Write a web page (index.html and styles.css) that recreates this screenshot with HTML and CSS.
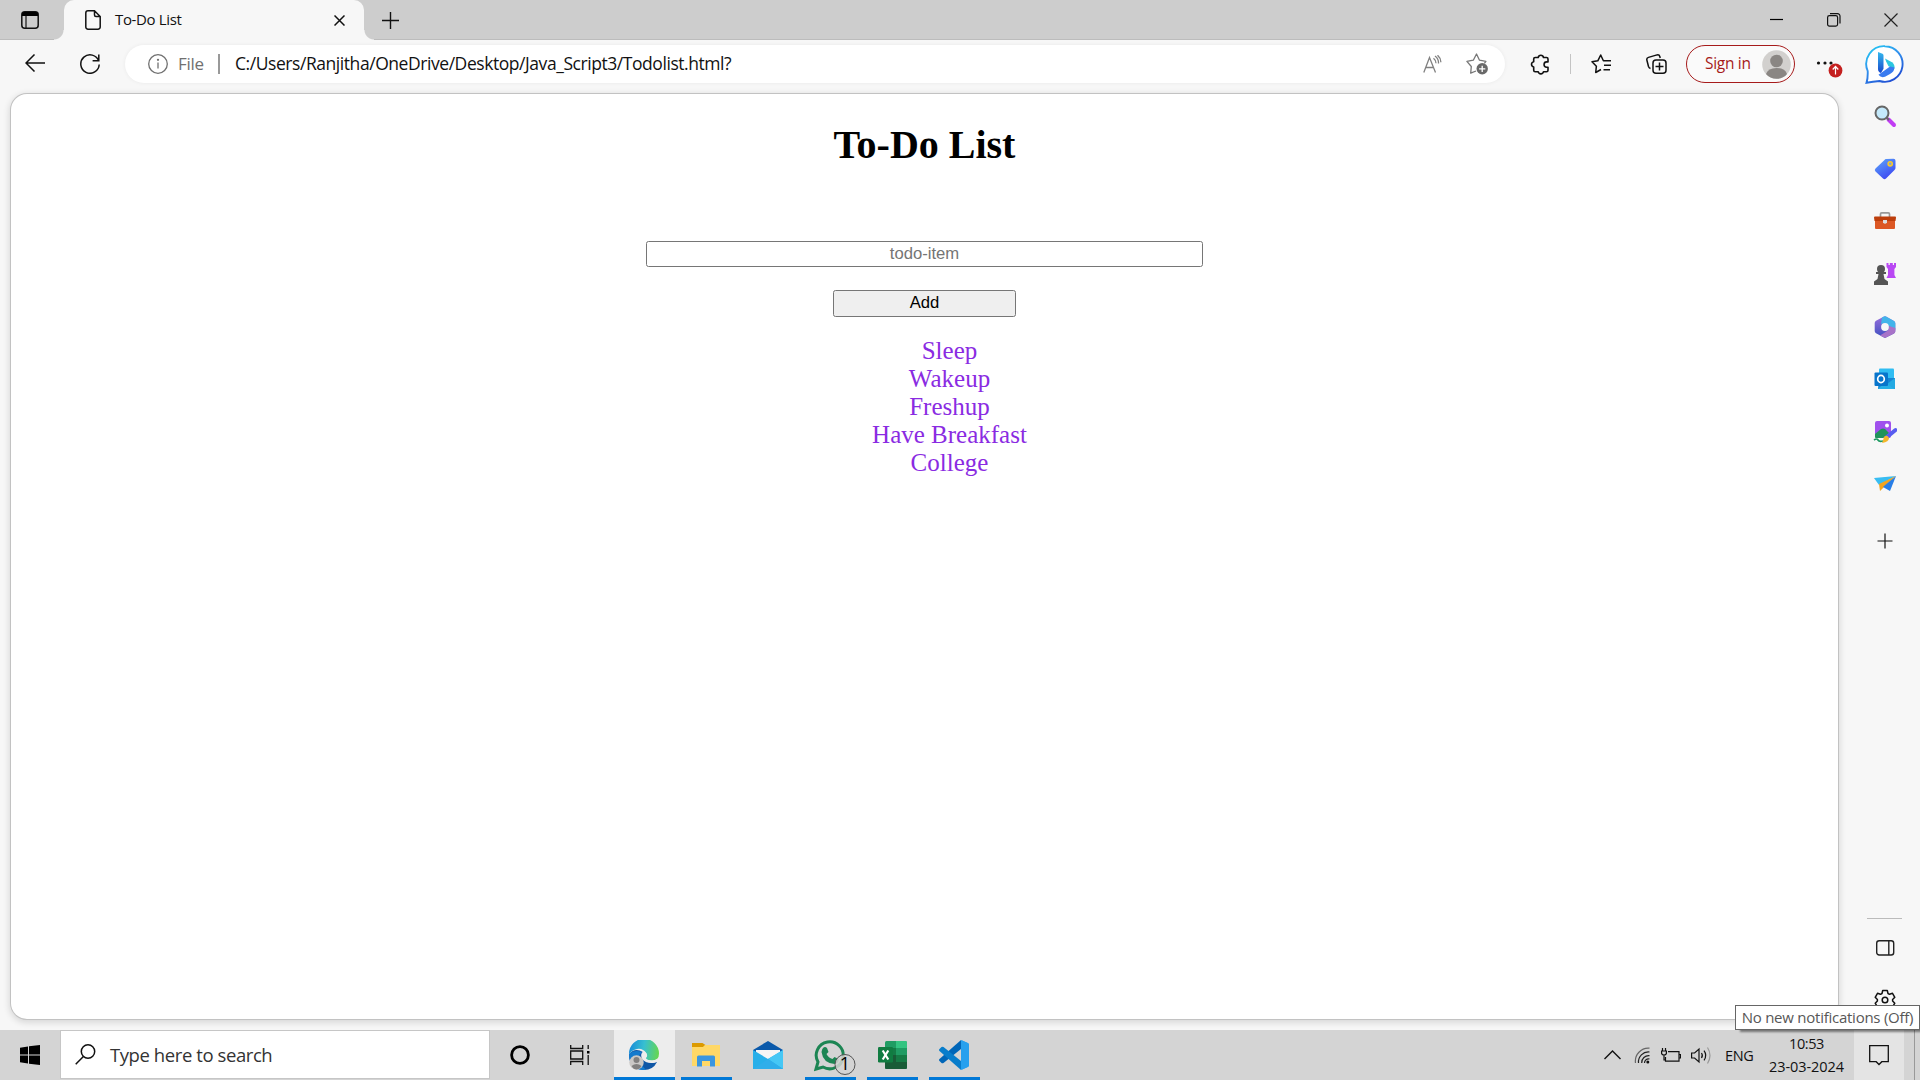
FILE: index.html
```html
<!DOCTYPE html>
<html lang="en">
<head>
<meta charset="utf-8">
<title>To-Do List</title>
<link rel="stylesheet" href="styles.css">
</head>
<body>
<div class="browser">
  <header class="tabstrip">
    <div class="tab-actions">
      <svg width="18" height="18" viewBox="0 0 18 18"><rect x=".8" y=".8" width="16.4" height="16.4" rx="3" fill="none" stroke="#111" stroke-width="1.5"/><path d="M1 5V3a2 2 0 0 1 2-2h12a2 2 0 0 1 2 2v2z" fill="#000"/><path d="M5 5v12" stroke="#111" stroke-width="1.2"/></svg>
    </div>
    <div class="tab">
      <svg class="doc" width="16" height="20" viewBox="0 0 16 20" fill="none" stroke="#111" stroke-width="1.5"><path d="M9.5.8H3A2.2 2.2 0 0 0 .8 3v14A2.2 2.2 0 0 0 3 19.2h10a2.2 2.2 0 0 0 2.2-2.2V6.500L9.500.8v4.200a1.500 1.500 0 0 0 1.500 1.500h4.200"/></svg>
      <span class="tab-title">To-Do List</span>
      <svg width="11" height="11" viewBox="0 0 11 11" stroke="#111" stroke-width="1.5"><path d="M.5.5l10 10M10.500.5l-10 10"/></svg>
    </div>
    <svg class="new-tab" width="17" height="17" viewBox="0 0 17 17" stroke="#111" stroke-width="1.400"><path d="M8.500 0v17M0 8.500h17"/></svg>
    <div class="window-buttons">
      <svg width="14" height="14" viewBox="0 0 14 14" stroke="#000" stroke-width="1.200"><path d="M0 6.500h13"/></svg>
      <svg width="14" height="14" viewBox="0 0 14 14" stroke="#111" stroke-width="1.200" fill="none"><rect x=".6" y="2.600" width="10" height="10.500" rx="1.800"/><path d="M3 .7h7.500a2.500 2.500 0 0 1 2.500 2.500V10.500"/></svg>
      <svg width="14" height="14" viewBox="0 0 14 14" stroke="#222" stroke-width="1.200"><path d="M.5.5l13 13M13.500.5l-13 13"/></svg>
    </div>
  </header>

  <div class="toolbar">
    <svg class="back" width="20" height="18" viewBox="0 0 20 18" fill="none" stroke="#111" stroke-width="1.500"><path d="M20 9H1M9.500.5L1 9l8.500 8.500"/></svg>
    <svg class="reload" width="20" height="20" viewBox="0 0 20 20" fill="none" stroke="#111" stroke-width="1.500"><path d="M18.700 7A9.200 9.200 0 1 0 19.200 10.500M18.800.5V6.700H12.600"/></svg>
    <div class="address">
      <svg width="20" height="20" viewBox="0 0 20 20" fill="none" stroke="#707070" stroke-width="1.300"><circle cx="10" cy="10" r="9.300"/><path d="M10 8.500v6"/><circle cx="10" cy="5.800" r=".5" fill="#707070"/></svg>
      <span class="scheme">File</span>
      <span class="divider"></span>
      <span class="url">C:/Users/Ranjitha/OneDrive/Desktop/Java_Script3/Todolist.html?</span>
      <svg class="read" width="19" height="18" viewBox="0 0 19 18" fill="none" stroke="#808080" stroke-width="1.300"><path d="M.8 17.500L6.500 2.500l6 15M2.700 12.500h8M10.500 3.200q2.500 2 2.500 5M12 .9q3.800 2.800 3.500 7.600M14.500.2q3.500 3 3.300 7"/></svg>
      <svg width="23" height="22" viewBox="0 0 23 22" fill="none" stroke="#777" stroke-width="1.300"><path d="M10 18l-5.300 2.200.6-6.700L.9 8.400l6.400-1.200L10.500 1l3 6.200 6.400 1.200-1.500 2" stroke-linejoin="round"/><circle cx="16.200" cy="15.800" r="5.700" fill="#696969" stroke="none"/><path d="M16.200 12.700v6.200M13.100 15.800h6.200" stroke="#fff"/></svg>
    </div>
    <svg class="puzzle" width="20" height="21" viewBox="0 0 20 21" fill="none" stroke="#111" stroke-width="1.600" stroke-linejoin="round"><path d="M5.200 3.500h3a2.700 2.700 0 0 1 5.300 0h3q1.500 0 1.500 1.500v2.900h-1.300a2.600 2.600 0 0 0 0 5.300H18v3q0 1.500-1.500 1.500h-3a2.700 2.700 0 0 1-5.300 0h-3q-1.500 0-1.500-1.500v-3.200a2.700 2.700 0 0 1 0-5.300V5q0-1.500 1.500-1.500z"/></svg>
    <span class="toolbar-line"></span>
    <svg class="favs" width="21" height="20" viewBox="0 0 21 20" fill="none" stroke="#111" stroke-width="1.500" stroke-linejoin="round"><path d="M10 15.500l-5.300 3 .7-6.300L1 7.800l5.800-1L9.700 1l2.700 5.800H20M13 11.300h7M12.500 15.800H19"/></svg>
    <svg class="collections" width="21" height="20" viewBox="0 0 21 20" fill="none" stroke="#111" stroke-width="1.500"><path d="M4.500 14.500a3 3 0 0 1-2-2L.9 6.200A2.300 2.300 0 0 1 2.500 3.400L11 .9a2.300 2.300 0 0 1 2.800 1.600l.4 1.500"/><rect x="7" y="6" width="13" height="13.200" rx="3"/><path d="M13.500 8.500v8M9.500 12.500h8"/></svg>
    <div class="signin"><span>Sign in</span>
      <svg width="29" height="29" viewBox="0 0 29 29"><circle cx="14.500" cy="14.500" r="14.300" fill="#d2d0ce"/><circle cx="14.500" cy="11" r="6.300" fill="#8a8683"/><path d="M4 24q2-6 10.500-6T25 24q-4 4.800-10.500 4.800T4 24z" fill="#8a8683"/></svg>
    </div>
    <svg class="more" width="28" height="28" viewBox="0 0 28 28"><g fill="#111"><circle cx="2.500" cy="13" r="1.600"/><circle cx="9" cy="13" r="1.600"/><circle cx="15" cy="13" r="1.600"/></g><circle cx="19.500" cy="20.500" r="6.900" fill="#c4201f"/><path d="M19.500 24.500v-7.500M16.700 19.500l2.800-3 2.800 3" fill="none" stroke="#fff" stroke-width="1.200"/></svg>
    <svg class="bing" width="39" height="40" viewBox="0 0 39 40"><defs><linearGradient id="ring" x1="0" y1="0" x2="0.600" y2="1"><stop offset="0" stop-color="#21cdf2"/><stop offset=".5" stop-color="#3293ee"/><stop offset="1" stop-color="#2050d4"/></linearGradient><linearGradient id="bee" x1="0" y1="0" x2="0" y2="1"><stop offset="0" stop-color="#35b9ee"/><stop offset="1" stop-color="#1747cc"/></linearGradient></defs><path d="M20 1.200a17.800 17.800 0 1 1-5.500 34.800Q8 36.500 1.500 37.800 3 33 2.700 26A17.800 17.800 0 0 1 20 1.200z" fill="#fff" stroke="url(#ring)" stroke-width="1.900"/><path d="M13 7l4.500 1.800q1 .5 1 2v13l-2.500 4.200Q13 27 13 24z" fill="url(#bee)"/><path d="M20 13.500l7 3.700q3 2 2.500 6.500l-6-2.500-2.500-5z" fill="#2cc6df"/><path d="M16 28l9-6.500 4.500 1Q29 27 25 29l-5 2.800q-4 1.500-6.500-2z" fill="#397bf0"/></svg>
  </div>

  <div class="content">
    <main class="page">
      <h1>To-Do List</h1>
      <form class="todo-form">
        <input class="todo-input" type="text" placeholder="todo-item">
        <button class="todo-add" type="button">Add</button>
      </form>
      <ul class="todos"><li>Sleep</li><li>Wakeup</li><li>Freshup</li><li>Have Breakfast</li><li>College</li></ul>
    </main>
    <aside class="sidebar">
      <svg viewBox="0 0 24 24"><path d="M15.500 15.500l5.500 5.500" stroke="#c13df4" stroke-width="4" stroke-linecap="round"/><path d="M13 13l3 3" stroke="#666" stroke-width="2"/><circle cx="9" cy="9" r="6.500" fill="#c4e9fb" stroke="#666" stroke-width="2"/></svg>
      <svg viewBox="0 0 24 24"><defs><linearGradient id="tag" x1="0" y1="0" x2=".6" y2="1"><stop offset="0" stop-color="#5da9fa"/><stop offset="1" stop-color="#3e49f2"/></linearGradient></defs><path d="M13 2l7.500-.2q2 0 2 2V11q0 1-1 2L13 21.500q-1.500 1.500-3 0l-7.500-7q-1.500-1.500 0-3L11.500 3q.5-.8 1.500-1z" fill="url(#tag)"/><circle cx="17.200" cy="6.800" r="2.100" fill="#81a3d0" stroke="#f7c829" stroke-width="1.600"/></svg>
      <svg viewBox="0 0 24 24"><path d="M7.500 8V5q0-1.200 1.200-1.200h6.600q1.200 0 1.200 1.200v3" fill="none" stroke="#999" stroke-width="1.700"/><rect x="2" y="8" width="20" height="12" rx="1" fill="#dc5724"/><path d="M1 8.500Q1 7.500 2 7.500h20q1.200 0 1 1.200L22.500 12h-21z" fill="#bd3e0c"/><path d="M10 11h4v2.500q-2 2.500-4 0z" fill="#ddd"/></svg>
      <svg viewBox="0 0 24 24"><path d="M13.500 1h2v2h1.300V1h3v2H21V1h2v4l-1.600 2v6l1.600 3h-9.500l1.500-3V7l-1.500-2z" fill="#b948f3"/><g fill="#555"><circle cx="8" cy="7" r="4"/><path d="M3 10h10v2H10.500l1 5 3.500 2.500V23H1v-3.500L4.500 17l1-5H3z"/></g></svg>
      <svg viewBox="0 0 24 24"><defs><linearGradient id="m365" x1="0" y1="0" x2="0" y2="1"><stop offset="0" stop-color="#9a6fdc"/><stop offset="1" stop-color="#3c50c0"/></linearGradient></defs><path d="M11 1.500q1-.6 2 0l8 4.500q1.300.8 1.300 2.200v8q0 1.400-1.300 2.200l-8 4.200q-1 .6-2 0l-8-4.400q-1.300-.8-1.300-2.200V8Q1.700 6.600 3 5.800z" fill="url(#m365)"/><path d="M9 2.600l2-1.100q1-.6 2 0l8 4.500q1.300.8 1.300 2.200V15L16 11l-4-3-4 1z" fill="#42b4ea"/><path d="M22.300 13v3.200q0 1.400-1.300 2.200l-8 4.200q-1 .6-2 0L7 20.400l8-4.900 1-4.500z" fill="#a873c8"/><circle cx="12" cy="12" r="3.900" fill="#f7f7f7"/></svg>
      <svg viewBox="0 0 24 24"><rect x="6" y="1.500" width="15" height="12" rx="1" fill="#30bdf2"/><path d="M6 11h16v11H5z" fill="#1685d4"/><path d="M22 11l-8 6 8 5z" fill="#23a9e2"/><path d="M12 15l10 7H5z" fill="#27b0e7"/><rect x="1.500" y="5.500" width="13.500" height="13.500" rx="1" fill="#0875cb"/><ellipse cx="8" cy="12" rx="3.300" ry="3.600" fill="none" stroke="#fff" stroke-width="1.700"/></svg>
      <svg viewBox="0 0 24 24"><rect x="2" y="1" width="16" height="17" rx="2" fill="#a051ed"/><circle cx="14" cy="5.500" r="2" fill="#fff"/><path d="M2 14l6-5q2-1 4 0l4 4-6 5H3q-1 0-1-1z" fill="#20935b"/><path d="M1 20q3-2 4 0t5 1" fill="none" stroke="#1c9a60" stroke-width="1.700"/><path d="M14 17l8.500-7" stroke="#575cf0" stroke-width="4" stroke-linecap="round"/><path d="M11 17q3-3 5 1 0 4-7 5 1-2 2-6z" fill="#f4b72b"/></svg>
      <svg viewBox="0 0 24 24"><path d="M1 5l22-2L6 12z" fill="#38bdf2"/><path d="M6 11l17-8-11 10-5 5z" fill="#f2a41f"/><path d="M11 13L23 3l-6 15-7-4z" fill="#287ee7"/></svg>
      <svg class="add-app" viewBox="0 0 24 24" stroke="#111" stroke-width="1.200"><path d="M12 4.500v15M4.500 12h15"/></svg>
      <span class="side-line"></span>
      <svg class="panel" viewBox="0 0 24 24" fill="none" stroke="#222" stroke-width="1.400"><rect x="3.700" y="4.700" width="17" height="14.300" rx="2.500"/><path d="M15.800 5v14"/></svg>
      <svg class="gear" viewBox="0 0 24 24" fill="none" stroke="#111" stroke-width="1.500" stroke-linejoin="round"><path d="M9.700 2.500h4.600l.7 3 1.500.8 3-1 2.300 4-2.200 2.200v1.500l2.200 2.200-2.300 4-3-1-1.500.8-.7 3H9.700l-.7-3-1.500-.8-3 1-2.300-4 2.200-2.200v-1.500L2.200 9.300l2.300-4 3 1L9 5.500z"/><circle cx="12" cy="12" r="2.800"/></svg>
    </aside>
  </div>
</div>

<footer class="taskbar">
  <div class="start"><svg width="20" height="20" viewBox="0 0 20 20"><path d="M0 2.700l8-1.200v8H0zM9 1.300L20 0v9.500H9zM0 10.500h8v8l-8-1.200zM9 10.500h11V20L9 18.700z"/></svg></div>
  <div class="search"><svg width="21" height="21" viewBox="0 0 21 21" fill="none" stroke="#111" stroke-width="1.500"><circle cx="13" cy="7.500" r="6.700"/><path d="M8.400 12.500L.7 20.200"/></svg><span>Type here to search</span></div>
  <div class="cell"><svg width="20" height="20" viewBox="0 0 20 20"><circle cx="10" cy="10" r="8.400" fill="none" stroke="#000" stroke-width="2.800"/></svg></div>
  <div class="cell taskview"><svg width="20" height="20" viewBox="0 0 20 20" fill="none" stroke="#111" stroke-width="1.300"><path d="M.7 0v3.500h12V0M.7 20v-3.500h12V20M.7 6h12v8H.7zM18.200 0v4M18.200 10v10"/><rect x="17" y="6" width="2.500" height="2.500" fill="#000" stroke="none"/></svg></div>
  <div class="app edge active"><svg width="30" height="30" viewBox="0 0 30 30"><defs><linearGradient id="sea" x1="0" y1=".3" x2="1" y2=".4"><stop offset="0" stop-color="#168bd9"/><stop offset=".5" stop-color="#37bfd1"/><stop offset="1" stop-color="#65d653"/></linearGradient></defs><path d="M0 14Q6 7 14 12l-1 6q4 6 15 4-4 8-13 8Q0 29 0 14z" fill="#0f57a6"/><path d="M0 14q5-5 13-2-5 4-2 10 2 4 6 8Q0 31 0 14z" fill="#147bce"/><path d="M0 14A15 15 0 0 1 30 13.500q0 7-7 7-6-.3-6-2.500 2-2 .5-4.500Q14 8 8 9q-5 1-8 5z" fill="url(#sea)"/><path d="M14 11.500q4 0 4 4.500-2 2-1 3 3 2 7 1.500 3-.5 4.500-2-.5 3-2 4-8 2-13-3-3-5 .5-8z" fill="#ededed"/><circle cx="7.500" cy="22.500" r="7.200" fill="#cac8c6"/><circle cx="7.500" cy="20" r="3" fill="#81807f"/><path d="M2.500 26q5-4 10 0-2 3.500-5 3.500T2.500 26z" fill="#81807f"/></svg></div>
  <div class="app open"><svg width="28" height="24" viewBox="0 0 28 24"><path d="M0 0h10.500l3 2-3 3H0z" fill="#dc9a00"/><path d="M0 4h11l2-2h15v21H0z" fill="#ffd867"/><path d="M5 23V14q0-1.500 1.500-1.500h15q1.500 0 1.500 1.500v9.500h-5V18h-8v5.500H5z" fill="#3a96df"/></svg></div>
  <div class="app"><svg width="30" height="28" viewBox="0 0 30 28"><path d="M0 9L15 0l15 9v8H0z" fill="#0a59aa"/><path d="M3 9h24v11H3z" fill="#f5f5f5"/><path d="M0 9l15 9 15-9v19H0z" fill="#27afe9"/><path d="M15 18l15-9v19z" fill="#45c7f5"/><path d="M0 28l15-10 15 10z" fill="#2faeea"/></svg></div>
  <div class="app open whatsapp"><svg width="42" height="36" viewBox="0 0 42 36"><path d="M2 29l2-7A13.500 13.500 0 1 1 9 27z" fill="none" stroke="#1c8553" stroke-width="3"/><path d="M9 8q2-2 4 0l1.500 4-2 2q2 4 6 5l2-2 4 2q1 4-4 5Q9 23 7.500 12 8 9 9 8z" fill="#1c8553"/><circle cx="31" cy="24.500" r="10" fill="#d4d4d4" fill-opacity=".85" stroke="#555"/><text x="31" y="30" text-anchor="middle" class="badge-text">1</text></svg></div>
  <div class="app open"><svg width="29" height="28" viewBox="0 0 29 28"><rect x="7" width="22" height="28" rx="1.500" fill="#209c63"/><path d="M18 0h9.500Q29 0 29 1.500V7H18z" fill="#34c481"/><path d="M7 7h11v7H7z" fill="#147c46"/><path d="M18 14h11v7H18z" fill="#157b45"/><path d="M7 14h11v7h11v5.500q0 1.500-1.500 1.500h-19Q7 28 7 26.500z" fill="#185c37"/><rect y="6" width="15" height="15.500" rx="1.200" fill="#107c41"/><path d="M4.700 9.500l5.600 9M10.300 9.500l-5.600 9" stroke="#fff" stroke-width="2.200"/></svg></div>
  <div class="app open"><svg width="30" height="30" viewBox="0 0 30 30"><path d="M22 0v9L4.500 23q-1 .7-2 0L.5 21q-1-1 0-2z" fill="#0066b8"/><path d="M22 30v-9L4.500 7q-1-.7-2 0L.5 9q-1 1 0 2z" fill="#087dcb"/><path d="M22 0l7 3.200q1 .5 1 2v19.600q0 1.500-1 2L22 30q1 0 .7-2V2Q23 0 22 0z" fill="#27a0ee"/><path d="M22 0v30l7-3q1-.5 1-2V5q0-1.500-1-2z" fill="#27a0ee"/></svg></div>
  <div class="tray">
    <svg width="17" height="10" viewBox="0 0 17 10" fill="none" stroke="#111" stroke-width="1.400"><path d="M.5 9l8-8 8 8"/></svg>
    <svg class="wifi" width="16" height="17" viewBox="0 0 16 17" fill="none" stroke="#222" stroke-width="1.200"><path d="M1.500 16A13 13 0 0 1 15.500 1.200" stroke="#666"/><path d="M4.500 16A10 10 0 0 1 15.500 5M7.700 16A7 7 0 0 1 15.500 8.700M10.500 16A4 4 0 0 1 15.500 12"/><circle cx="13.800" cy="15" r="1.500" fill="#111" stroke="none"/></svg>
    <svg class="battery" width="20" height="15" viewBox="0 0 20 15" fill="none" stroke="#111" stroke-width="1.200"><path d="M7 3.600h11v9.500H4.500V9M18 6.500h1.500V10H18M1.500 0v3M4.500 0v3M.6 3h4.800v2.500Q5 7 3 7T.6 5.500zM3 7v5h1.500"/></svg>
    <svg class="volume" width="21" height="19" viewBox="0 0 21 19" fill="none" stroke="#111" stroke-width="1.200"><path d="M.6 7h3L8 3v13l-4.400-4h-3zM10.500 7q1.700 2.500 0 5M13 4.700q3.500 4.800 0 9.600"/><path d="M16.500 1.500q5 8 0 16" stroke="#999"/></svg>
    <span class="lang">ENG</span>
    <div class="clock"><span>10:53</span><span class="date">23-03-2024</span></div>
    <div class="action"><svg width="20" height="21" viewBox="0 0 20 21" fill="none" stroke="#111" stroke-width="1.300"><path d="M.7.7h18.600v16h-6.500L10 19.500l-2.800-2.800H.7z"/></svg><div class="tooltip">No new notifications (Off)</div></div>
    <div class="show-desktop"></div>
  </div>
</footer>
</body>
</html>
```
FILE: styles.css
```css
* { box-sizing: border-box; }
body { margin: 0; width: 1920px; height: 1080px; overflow: hidden; display: flex; flex-direction: column; background: #f7f7f7; font-family: "Open Sans", "Noto Sans", sans-serif; color: #111; }
svg { display: block; flex: none; }
.browser { height: 1030px; display: flex; flex-direction: column; }

.tabstrip { height: 40px; flex: none; display: flex; align-items: center; background: #cdcdcd; box-shadow: inset 0 -1px 0 #bcbcbc; }
.tab-actions { width: 64px; padding-left: 21px; }
.tab { position: relative; width: 300px; height: 40px; padding: 0 19px 0 21px; display: flex; align-items: center; background: #f7f7f7; border-radius: 10px 10px 0 0; }
.tab::before, .tab::after { content: ""; position: absolute; bottom: 0; width: 10px; height: 10px; }
.tab::before { left: -10px; background: radial-gradient(circle at 0 0, #cdcdcd 9px, #f7f7f7 10px); }
.tab::after { right: -10px; background: radial-gradient(circle at 100% 0, #cdcdcd 9px, #f7f7f7 10px); }
.tab-title { margin-left: 14px; padding-bottom: 2px; flex: 1; font-size: 15px; letter-spacing: -0.35px; }
.new-tab { margin-left: 18px; }
.window-buttons { margin-left: auto; padding-right: 22px; display: flex; gap: 43px; }
.window-buttons svg { margin-top: -1px; }

.toolbar { height: 53px; flex: none; padding: 5px 16px 0 25px; display: flex; align-items: flex-start; }
.toolbar > svg { margin-top: 9px; }
.reload { margin-left: 35px; }
.address { width: 1380px; height: 38px; margin-left: 25px; padding: 0 16px 1px 23px; display: flex; align-items: center; background: #fff; border-radius: 19px; box-shadow: 0 0 4px rgba(0,0,0,.06); white-space: nowrap; }
.scheme { width: 40px; margin-left: 10px; font-size: 17px; letter-spacing: -.3px; color: #707070; }
.divider { width: 2px; height: 20px; background: #999; }
.url { margin-left: 15px; padding-bottom: 1px; flex: 1; font-size: 17.500px; letter-spacing: -.44px; }
.read { margin-right: 24px; }
.puzzle { margin-left: 25px; }
.toolbar-line { width: 1px; height: 20px; margin: 9px 20px 0; background: #c4c4c4; }
.collections { margin-left: 34px; }
.signin { width: 109px; height: 38px; margin-left: 19px; padding: 0 3px 0 18px; display: flex; align-items: center; justify-content: space-between; border: 1.5px solid #a61b1b; border-radius: 19px; background: #fafafa; color: #a61b1b; font-size: 15.500px; letter-spacing: -.3px; }
.signin span { padding-bottom: 2px; }
.more { margin-left: 21px; }
.toolbar > .more { margin-top: 5px; }
.toolbar > .bing { margin: 0 0 0 auto; }

.content { flex: 1; display: flex; min-height: 0; }
.page { width: 1827px; height: 925px; margin-left: 11px; margin-top: 1px; flex: none; background: #fff; border-radius: 16px; box-shadow: 0 0 0 1px #c2c2c2, 0 2px 6px 2px rgba(0,0,0,.12); font-family: "Liberation Serif", serif; text-align: center; }
.page h1 { margin: 28px 0 0; font-size: 40px; line-height: 46px; color: #000; }
.todo-form { margin-top: 73px; display: flex; flex-direction: column; align-items: center; gap: 23px; }
.todo-input, .todo-add { border: 1px solid #767676; border-radius: 2.500px; font: 16.667px/19px "Liberation Sans", sans-serif; text-align: center; color: #000; }
.todo-input { width: 557px; height: 26px; padding: 1px 2px; }
.todo-input::placeholder { color: #757575; }
.todo-add { width: 183px; height: 27px; padding: 0 0 2px; background: #efefef; }
.todos { margin: 20px 0 0; padding: 0 0 0 50px; list-style: none; font-size: 25px; line-height: 28px; color: #8a2be2; }

.sidebar { flex: 1; padding: 11px 0 0 28px; display: flex; flex-direction: column; align-items: center; margin-right: 17px; gap: 28.700px; }
.sidebar svg { width: 24px; height: 24px; }
.sidebar .add-app { margin-top: 3px; }
.side-line { width: 35px; height: 1px; flex: none; background: #bbb; margin-top: 337px; }
.sidebar .panel { margin-top: -12px; }
.sidebar .gear { margin-top: -1px; }

.taskbar { height: 50px; flex: none; display: flex; background: #d4d4d4; }
.start { width: 60px; padding: 15px 0 0 20px; }
.search { width: 430px; height: 49px; padding-left: 14px; display: flex; align-items: center; gap: 14px; background: #fff; border: 1px solid #c6c6c6; font-size: 18.500px; letter-spacing: -.42px; color: #333; }
.search span { padding-bottom: 1px; }
.cell { width: 60px; display: flex; align-items: center; justify-content: center; }
.taskview { width: 64px; padding-right: 5px; }
.app { width: 51px; margin-left: 11px; display: flex; align-items: center; justify-content: center; border-bottom: 3px solid transparent; padding: 3px 1px 0 0; }
.edge { width: 61px; margin-left: 0; padding-right: 2px; background: #ededed; }
.edge + .app { margin-left: 6px; }
.active, .open { border-bottom-color: #0078d7; }
.whatsapp svg { margin-left: 10px; margin-top: 5px; }
.badge-text { font: 18px "Open Sans", sans-serif; fill: #000; }
.tray { margin-left: auto; display: flex; align-items: center; }
.wifi { margin-left: 13px; }
.battery { margin-left: 11px; }
.volume { margin-left: 10px; }
.lang { width: 31px; margin-left: 13px; font-size: 14.500px; letter-spacing: -.4px; }
.clock { width: 98px; padding-left: 3px; display: flex; flex-direction: column; align-items: center; gap: 3px; font-size: 14.500px; line-height: 20px; letter-spacing: -.4px; }
.date { letter-spacing: -.05px; }
.action { position: relative; width: 50px; height: 50px; padding: 15px; background: #e4e4e4; }
.tooltip { position: absolute; right: -16px; top: -25px; width: 185px; height: 25px; border: 1px solid #666; background: #fff; color: #575757; font-size: 15px; line-height: 22px; letter-spacing: -.25px; text-align: center; white-space: nowrap; box-shadow: 4px 3px 2px -1px rgba(0,0,0,.45); }
.show-desktop { width: 16px; height: 50px; background: linear-gradient(90deg, transparent 10px, #999 10px, #999 11px, transparent 11px); }
```
